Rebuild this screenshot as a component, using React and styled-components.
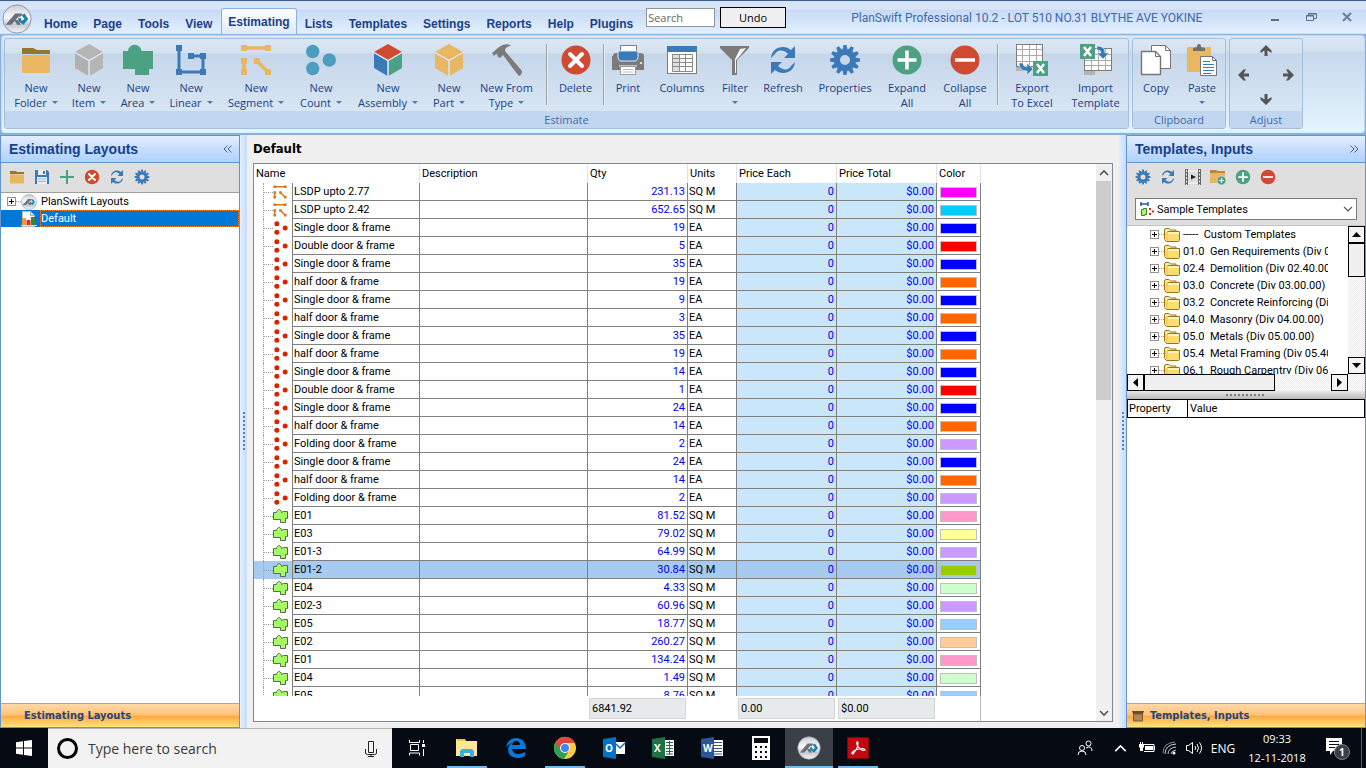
import React from "react";
import styled, { createGlobalStyle } from "styled-components";

const ui = `Roboto, "Noto Sans", sans-serif`;
const ribbonFont = `"Open Sans", "Noto Sans", sans-serif`;
const tabFont = `"Liberation Sans", Arial, sans-serif`;
const boldFont = `"DejaVu Sans Condensed", "DejaVu Sans", sans-serif`;

const GlobalStyle = createGlobalStyle`
* { box-sizing: border-box; }
body { margin: 0; background: #f0f0f0; font-family: ${ui}; font-size: 11px; color: #000; overflow: hidden; }
button, input, select { font: inherit; color: inherit; margin: 0; padding: 0; border: 0; background: none; border-radius: 0; }
ul { list-style: none; margin: 0; padding: 0; }
h1, h2, p { margin: 0; }
svg { display: block; flex: none; }
`;

/* ---------- icons ---------- */

const Svg = ({ size = 32, w, h, box = "0 0 32 32", children }) => (
	<svg width={w || size} height={h || size} viewBox={box} fill="none" aria-hidden="true">{children}</svg>
);

const Cube = ({ top, left, right, size }) => (
	<Svg size={size}>
		<path d="M16 0 30 8 16 16 2 8z" fill={top} />
		<path d="M2 9 15.500 17V32L2 24z" fill={left} />
		<path d="M30 9 16.500 17V32L30 24z" fill={right} />
		<path d="M2 8.500 16 16.500 30 8.500M16 16.500V32" stroke="#dbe6f3" strokeWidth="1.200" />
	</Svg>
);

const FolderIcon = ({ size }) => (
	<Svg size={size}>
		<path d="M2 4h11l4 2h13v4H2z" fill="#94762c" />
		<rect x="2" y="11" width="28" height="18" rx="1" fill="#e9b662" />
	</Svg>
);

const AreaIcon = () => (
	<Svg>
		<circle cx="12.700" cy="7.500" r="6.800" fill="#4ba181" />
		<path d="M1 7h30v18h-4v6H13v-6H1z" fill="#4ba181" />
	</Svg>
);

const LinearIcon = () => (
	<Svg>
		<path d="M4 4v24h24V12H16" stroke="#3b79b7" strokeWidth="3" />
		<path d="M1 1h6v6H1zM1 25h6v6H1zM25 25h6v6h-6zM25 9h6v6h-6zM13 9h6v6h-6z" fill="#3b79b7" />
	</Svg>
);

const SegmentIcon = ({ size, color = "#e9b662" }) => (
	<Svg size={size}>
		<path d="M4 4h24M4 17v11M17 17l11 11" stroke={color} strokeWidth="3.500" />
		<path d="M1 1h6v6H1zM25 1h6v6h-6zM1 14h6v6H1zM1 25h6v6H1zM14 14h6v6h-6zM25 25h6v6h-6z" fill={color} />
	</Svg>
);

const CountIcon = ({ size, color = "#4c9dc0", r = 6.7 }) => (
	<Svg size={size}>
		<circle cx="7.700" cy="7.500" r={r} fill={color} />
		<circle cx="7.700" cy="24.500" r={r} fill={color} />
		<circle cx="24.300" cy="16" r={r} fill={color} />
	</Svg>
);

const HammerIcon = () => (
	<Svg>
		<path d="M1 9 8 3Q13-1 20 1L19 2Q14 3 14 7L31 27Q31 31 28 32L27 31 12 11 9 14 7 13 6 10Q4 10 3 12z" fill="#7b7b7b" />
	</Svg>
);

const DeleteIcon = ({ size }) => (
	<Svg size={size}>
		<circle cx="16" cy="16" r="14.500" fill="#cf4a31" />
		<path d="M10 10 22 22M22 10 10 22" stroke="#fff" strokeWidth="4" strokeLinecap="round" />
	</Svg>
);

const PrintIcon = () => (
	<Svg>
		<rect x="8.500" y="1.500" width="16" height="8" fill="#fff" stroke="#7f7f7f" />
		<path d="M1 12q0-3 3-3h24q4 0 4 3v14H0V12z" fill="#7b7b7b" />
		<path d="M6 7h20v7l-2 3H8l-2-3z" fill="#3b79b7" stroke="#dfe8f3" />
		<circle cx="29" cy="19" r="1" fill="#fff" />
		<path d="M7 22h18" stroke="#fff" />
		<rect x="8.500" y="22.500" width="15" height="8" fill="#fff" stroke="#9a9a9a" />
		<path d="M11 25.500h10M11 28h10" stroke="#bbb" />
	</Svg>
);

const ColumnsIcon = () => (
	<Svg>
		<rect x="1.500" y="2.500" width="29" height="27" fill="#fff" stroke="#7d7d7d" />
		<rect x="1" y="2" width="30" height="6" fill="#3b79b7" />
		<path d="M6 10h7v17H6z" fill="#dedede" />
		<path d="M6.500 10.500h20v17h-20zM13.500 10v17M19.500 10v17M6 14.500h20M6 18.500h20M6 22.500h20" stroke="#8b8b8b" />
	</Svg>
);

const FilterIcon = () => (
	<Svg>
		<path d="M1 2h29v2L18 16v15h-5V16L1 4z" fill="#7b7b7b" />
		<path d="M27 4 19 14 17 16v13h-1V15l5-10z" fill="#f4f7fb" />
	</Svg>
);

const RefreshIcon = ({ size }) => (
	<Svg size={size}>
		<path d="M4 14C5 3 17 0 24 6L28 2V14H17L21 10C16 5 10 6 8 10z" fill="#3b79b7" />
		<path d="M28 18C27 29 15 32 8 26L4 30V18H15L11 22C16 27 22 26 24 22z" fill="#3b79b7" />
	</Svg>
);

const GearIcon = ({ size }) => (
	<Svg size={size}>
		<circle cx="16" cy="16" r="8" stroke="#3b79b7" strokeWidth="6" />
		{[...Array(12)].map((_, i) => (
			<path key={i} d="M13.500 6 14.500 1h3L18.500 6z" fill="#3b79b7" transform={`rotate(${i * 30} 16 16)`} />
		))}
	</Svg>
);

const PlusCircle = ({ size }) => (
	<Svg size={size}>
		<circle cx="16" cy="16" r="14.500" fill="#4ba181" />
		<path d="M16 6.500v19M6.500 16h19" stroke="#fff" strokeWidth="3.500" />
	</Svg>
);

const MinusCircle = ({ size }) => (
	<Svg size={size}>
		<circle cx="16" cy="16" r="14.500" fill="#cf4a31" />
		<path d="M6 16h20" stroke="#fff" strokeWidth="3.500" />
	</Svg>
);

const ExportIcon = () => (
	<Svg>
		<rect x=".5" y=".5" width="26" height="22" fill="#fff" stroke="#7d7d7d" />
		<path d="M1 5.500h25M1 11.500h25M1 17.500h25M6.500 1v21M13.500 1v21M20.500 1v21" stroke="#aaa" />
		<path d="M0 23h16v4H0z" fill="#b4b4b4" />
		<path d="M3 19h4q0 4 4 4v-4l6 6-6 6v-4q-8 0-8-8z" fill="#3b79b7" stroke="#fff" strokeWidth=".5" />
		<rect x="17" y="17" width="15" height="15" fill="#4ba181" />
		<path d="m21 20 7 9m0-9-7 9" stroke="#fff" strokeWidth="2.500" />
	</Svg>
);

const ImportIcon = () => (
	<Svg>
		<rect x="4.500" y="4.500" width="27" height="22" fill="#fff" stroke="#7d7d7d" />
		<path d="M5 10.500h26M5 16.500h26M5 21.500h26M11.500 5v21M18.500 5v21M25.500 5v21" stroke="#aaa" />
		<path d="M4 27h11v4H4z" fill="#b4b4b4" />
		<path d="M15 27h15v3H15z" fill="#d7d7d7" />
		<rect x="0" y="0" width="15" height="15" fill="#4ba181" />
		<path d="m4 3 7 9m0-9-7 9" stroke="#fff" strokeWidth="2.500" />
		<path d="M17 2v4q4 0 4 3h-4l6 6 6-6h-4q0-7-8-7z" fill="#3b79b7" stroke="#fff" strokeWidth=".5" />
	</Svg>
);

const CopyIcon = () => (
	<Svg>
		<path d="M11.500 1.500h14l5 5v18h-19z" fill="#fff" stroke="#767676" />
		<path d="M25.500 1.500v5h5" stroke="#767676" />
		<path d="M1.500 7.500h14l5 5v18h-19z" fill="#fff" stroke="#767676" strokeWidth="1.400" />
		<path d="M15.500 7.500v5h5" stroke="#767676" />
	</Svg>
);

const PasteIcon = () => (
	<Svg>
		<rect x="1" y="3" width="24" height="25" rx="1" fill="#e9b662" />
		<path d="M7 7V4l4-1q0-3 2-3t2 3l4 1v3z" fill="#707070" />
		<path d="M14.500 12.500h12l4 4v15h-16z" fill="#fff" stroke="#767676" />
		<path d="M26.500 12.500v4h4" stroke="#767676" />
		<path d="M17 17.500h7M17 20.500h11M17 23.500h11M17 26.500h11M17 29.500h8" stroke="#3b79b7" />
	</Svg>
);

const ArrowIcon = ({ turn }) => (
	<Svg size={12} box="0 0 12 12">
		<path d="M6 0 11.500 5.500V8L7.500 5.500V11h-3V5.500L.5 8V5.500z" fill="#555" transform={`rotate(${turn} 6 6)`} />
	</Svg>
);

const LogoIcon = ({ size }) => (
	<Svg size={size}>
		<defs>
			<linearGradient id="metal" x1="0" y1="0" x2="0" y2="1">
				<stop offset="0" stopColor="#c9ccd4" />
				<stop offset=".45" stopColor="#fafafc" />
				<stop offset=".7" stopColor="#c6c9d1" />
				<stop offset="1" stopColor="#f5f6f8" />
			</linearGradient>
		</defs>
		<circle cx="16" cy="16" r="15" fill="url(#metal)" stroke="#8a93a3" />
		<path d="M4 22 14 10H21L22 11 19 14 18 13 10 22z" fill="#6c7076" />
		<path d="M13 17h4l3 5h-4z" fill="#6c7076" />
		<path d="M21 12 24 10 28 16 23 22 18 19 17 15 20 15 21 18 24 16z" fill="#1786a5" />
	</Svg>
);

const SaveIcon = () => (
	<Svg size={16} box="0 0 16 16">
		<path d="M1 1h12l2 2v12H1z" fill="#3b79b7" />
		<path d="M4 1h8v5H4zM3 8h10v7H3z" fill="#e8edf3" />
		<path d="M9 2h2v3H9z" fill="#3b79b7" />
		<path d="M4 10h8M4 12.500h8" stroke="#9fb2c8" />
	</Svg>
);

const PlusIcon = () => (
	<Svg size={16} box="0 0 16 16"><path d="M8 1v14M1 8h14" stroke="#4ba181" strokeWidth="2" /></Svg>
);

const FilmIcon = () => (
	<Svg size={16} box="0 0 16 16">
		<path d="M0 0h16v16H0z" fill="#dcdcdc" />
		<path d="M0 0h3v16H0zM13 0h3v16h-3z" fill="#666" />
		<path d="M1.500 1v15M14.500 1v15" stroke="#eee" strokeDasharray="2 1.500" />
		<path d="M3 2h10M3 14h10" stroke="#fff" />
		<path d="M6 5.500 11 8 6 10.500z" fill="#222" />
	</Svg>
);

const FolderPlusIcon = () => (
	<Svg size={16} box="0 0 16 16">
		<path d="M0 1h6l2 1h7v2H0z" fill="#b68a3c" />
		<path d="M0 4h15v10H0z" fill="#e9b662" />
		<circle cx="11.500" cy="11.500" r="4.500" fill="#4ba181" stroke="#e6e6e6" strokeWidth=".7" />
		<path d="M11.500 9v5M9 11.500h5" stroke="#fff" strokeWidth="1.200" />
	</Svg>
);

const ChartIcon = () => (
	<Svg size={16} box="0 0 16 16">
		<path d="M1.500.5h8l4 4v11h-12z" fill="#fff" stroke="#bbb" />
		<path d="M9.500.5v4h4" fill="#ddd" stroke="#aaa" />
		<path d="M1 7h4v7H1z" fill="#f0a020" />
		<path d="M5.500 9h4v5h-4z" fill="#d93024" />
		<path d="M10 6h4v8h-4z" fill="#2e8b3d" />
		<path d="M0 14.500h16" stroke="#d8dde2" />
	</Svg>
);

const BlobIcon = () => (
	<Svg size={16} box="0 0 16 16">
		<path d="M.5 4.500h3v-1l2-2h1l2 2v1l2-1h4v7h-2v4h-5v-3h-7z" fill="#a4fb63" stroke="#5a6a52" />
	</Svg>
);

const YellowFolder = () => (
	<Svg size={16} box="0 0 16 16">
		<path d="M.5 12V3q0-1.500 1.500-1.500h3L6.500 3H12v2" fill="#fdf0a8" stroke="#9c7417" />
		<path d="M3.500 4.500h12v9l-1 1h-12l-2-2" fill="#fbdc6e" stroke="#9c7417" />
		<path d="M1 5h3v8H2z" fill="#f5cf5c" />
		<path d="M4 5.500h11M4 6.500h11" stroke="#fff3bd" />
	</Svg>
);

const TemplatesIcon = () => (
	<Svg size={14} box="0 0 14 14">
		<path d="M1 2h7M1 0v4M8 0v4" stroke="#1f5e9c" strokeWidth="1.500" />
		<path d="M1.500 7.500h2v-1h3v6h-2v1h-3z" fill="#a4fb63" stroke="#4c7a34" />
		<path d="M9 6h2v2H9zM9 11h2v2H9zM12 8.500h2v2h-2z" fill="#d22" />
	</Svg>
);

const BoxIcon = () => (
	<Svg size={12} box="0 0 12 12">
		<path d="M0 1h12l-1 3H1z" fill="#6b4c2a" />
		<path d="M1.500 4h9v7h-9z" fill="#ad8657" stroke="#7b5a34" />
	</Svg>
);

const Chevron = ({ turn = 0, color = "#555", size = 10, width = 1.6 }) => (
	<Svg size={size} box="0 0 10 10">
		<path d="M1 3 5 7 9 3" stroke={color} strokeWidth={width} transform={`rotate(${turn} 5 5)`} />
	</Svg>
);

const DoubleChevron = ({ turn = 0 }) => (
	<Svg size={10} box="0 0 10 10">
		<path d="M4.500 1.500 1 5 4.500 8.500M8.500 1.500 5 5 8.500 8.500" stroke="#3a62a4" transform={`rotate(${turn} 5 5)`} />
	</Svg>
);

const Triangle = ({ turn }) => (
	<Svg size={9} box="0 0 9 9"><path d="M0 7 4.500 2 9 7z" fill="#000" transform={`rotate(${turn} 4.500 4.500)`} /></Svg>
);

/* ---------- window ---------- */

const Desktop = styled.div`
display: flex;
flex-direction: column;
height: 100vh;
`;

const TitleBar = styled.header`
display: flex;
align-items: flex-end;
height: 35px;
padding-left: 2px;
border-top: 1px solid #3d5c8c;
border-bottom: 1px solid #8db2e3;
background: linear-gradient(#d5e3f6 0, #dbe6fb 8px, #c7daf5 9px, #e2effe 32px, #b6d4f6 33px);
flex: none;
`;

const LogoButton = styled.button`
display: flex;
align-items: center;
width: 34px;
height: 30px;
`;

const Tab = styled.button`
font-family: ${tabFont};
font-size: 12px;
font-weight: bold;
color: #1b4086;
height: ${p => p.$active ? "26px" : "20px"};
line-height: 20px;
padding: 0 8px;
${p => p.$active && `
	padding: 0 6px;
	margin-left: 1px;
	border: 1px solid #8ab1e4;
	border-bottom: 0;
	border-radius: 3px 3px 0 0;
	background: linear-gradient(#fff, #dfe9f6);
`}
`;

const SearchBox = styled.input`
font-family: ${ribbonFont};
width: 69px;
height: 19px;
margin: 0 5px 7px;
padding: 0 1px;
border: 1px solid #8f959c;
background: #fff;
&::placeholder { color: #666; opacity: 1; }
`;

const UndoButton = styled.button`
font-family: ${ribbonFont};
width: 66px;
height: 21px;
margin-bottom: 6px;
border: 1px solid #000;
background: #f0f0f0;
`;

const WindowTitle = styled.h1`
flex: 1;
align-self: flex-start;
padding: 8px 0 0 65px;
font: normal 12px/18px ${ui};
color: #4169aa;
white-space: nowrap;
`;

const WindowButtons = styled.div`
display: flex;
align-self: flex-start;
gap: 24px;
padding: 10px 13px 0 0;
`;

const RibbonShell = styled.div`
flex: none;
background: #8caedb;
padding-bottom: 2px;
`;

const Ribbon = styled.section`
display: flex;
gap: 3px;
height: 98px;
margin: 0 1px;
padding: 2px;
border: 1px solid #b9dbf5;
border-bottom: 2px solid #d5f3fc;
border-radius: 4px;
background: linear-gradient(#dae6f3 0, #d3e1f0 15px, #c6d8ec 16px, #e3f4fe 94px);
`;

const Group = styled.div`
display: flex;
flex-direction: column;
border: 1px solid #a3bfdc;
border-radius: 3px;
background: linear-gradient(#dce7f3 0, #d3e0ef 14px, #c6d6ea 15px, #d8e6f4 74px);
`;

const GroupBody = styled.div`
display: flex;
flex: 1;
padding-top: 5px;
`;

const GroupName = styled.div`
height: 17px;
font: 11px/17px ${ribbonFont};
color: #4469ab;
text-align: center;
background: #c1d7ef;
`;

const Tool = styled.button`
display: flex;
flex-direction: column;
align-items: center;
gap: 4px;
width: ${p => p.$w}px;
font-family: ${ribbonFont};
line-height: 15px;
color: #1b4186;
white-space: nowrap;
`;

const ToolLine = styled.span`
display: flex;
align-items: center;
justify-content: center;
gap: 5px;
height: 15px;
`;

const Caret = styled.i`
border: 3px solid transparent;
border-top-color: #4d7db8;
border-bottom: 0;
`;

const ToolRule = styled.div`
width: 2px;
height: 61px;
margin: 0 2px;
background: #a2a4a8;
border-right: 1px solid #e3ebf5;
`;

const AdjustGrid = styled.div`
display: grid;
flex: 1;
grid-template-columns: repeat(3, 22px);
grid-template-rows: repeat(3, 24px);
place-items: center;
padding: 0 3px;
`;

const ArrowButton = styled.button`
grid-area: ${p => p.$area};
`;

const tools = [
	[62, FolderIcon, "New", "Folder", 1],
	[44, () => <Cube top="#b5b5b5" left="#b0b0b0" right="#b5b5b5" />, "New", "Item", 1],
	[54, AreaIcon, "New", "Area", 1],
	[52, LinearIcon, "New", "Linear", 1],
	[78, SegmentIcon, "New", "Segment", 1],
	[52, CountIcon, "New", "Count", 1],
	[82, () => <Cube top="#cf4a31" left="#3b79b7" right="#4ba181" />, "New", "Assembly", 1],
	[40, () => <Cube top="#e9b662" left="#e9b662" right="#e9b662" />, "New", "Part", 1],
	[75, HammerIcon, "New From", "Type", 1],
	null,
	[51, DeleteIcon, "Delete"],
	null,
	[42, PrintIcon, "Print"],
	[66, ColumnsIcon, "Columns"],
	[40, FilterIcon, "Filter", "", 1],
	[56, RefreshIcon, "Refresh"],
	[68, GearIcon, "Properties"],
	[56, PlusCircle, "Expand", "All"],
	[60, MinusCircle, "Collapse", "All"],
	null,
	[62, ExportIcon, "Export", "To Excel"],
	[65, ImportIcon, "Import", "Template"],
];

const clipboard = [
	[46, CopyIcon, "Copy"],
	[46, PasteIcon, "Paste", "", 1],
];

const Tools = ({ items }) => items.map((item, i) => {
	if (!item) return <ToolRule key={i} />;
	const [w, Icon, first, second, menu] = item;
	return (
		<Tool key={i} $w={w}>
			<Icon />
			<span>
				<ToolLine>{first}</ToolLine>
				{(second || menu) && <ToolLine>{second}{menu && <Caret />}</ToolLine>}
			</span>
		</Tool>
	);
});

const Header = () => (
	<>
		<TitleBar>
			<LogoButton aria-label="Main menu"><LogoIcon size={30} /></LogoButton>
			{["Home", "Page", "Tools", "View", "Estimating", "Lists", "Templates", "Settings", "Reports", "Help", "Plugins"].map(t => (
				<Tab key={t} $active={t === "Estimating"}>{t}</Tab>
			))}
			<SearchBox placeholder="Search" aria-label="Search" />
			<UndoButton>Undo</UndoButton>
			<WindowTitle>PlanSwift Professional 10.2 - LOT 510 NO.31 BLYTHE AVE YOKINE</WindowTitle>
			<WindowButtons>
				<button aria-label="Minimize"><Svg size={12} box="0 0 12 12"><path d="M2 9h8" stroke="#5c6f8d" strokeWidth="2" /></Svg></button>
				<button aria-label="Restore"><Svg size={12} box="0 0 12 12"><path d="M3.500 4V2.500h8v5H9M1.500 4.500h7v5h-7z" stroke="#5c6f8d" /><path d="M3 3h8M1 5h8" stroke="#5c6f8d" /></Svg></button>
				<button aria-label="Close"><Svg size={12} box="0 0 12 12"><path d="m2 2 8 8m0-8-8 8" stroke="#6c7e99" strokeWidth="2" /></Svg></button>
			</WindowButtons>
		</TitleBar>
		<RibbonShell>
			<Ribbon>
				<Group>
					<GroupBody><Tools items={tools} /></GroupBody>
					<GroupName>Estimate</GroupName>
				</Group>
				<Group>
					<GroupBody><Tools items={clipboard} /></GroupBody>
					<GroupName>Clipboard</GroupName>
				</Group>
				<Group>
					<AdjustGrid>
						<ArrowButton $area="1 / 2" aria-label="Up"><ArrowIcon turn={0} /></ArrowButton>
						<ArrowButton $area="2 / 1" aria-label="Left"><ArrowIcon turn={270} /></ArrowButton>
						<ArrowButton $area="2 / 3" aria-label="Right"><ArrowIcon turn={90} /></ArrowButton>
						<ArrowButton $area="3 / 2" aria-label="Down"><ArrowIcon turn={180} /></ArrowButton>
					</AdjustGrid>
					<GroupName>Adjust</GroupName>
				</Group>
			</Ribbon>
		</RibbonShell>
	</>
);

/* ---------- panels ---------- */

const Workspace = styled.main`
display: flex;
flex: 1;
min-height: 0;
background: #f0f0f0;
`;

const Panel = styled.aside`
display: flex;
flex-direction: column;
flex: none;
width: 240px;
border: 1px solid #6593cf;
background: #fff;
`;

const PanelTitle = styled.div`
display: flex;
align-items: center;
justify-content: space-between;
flex: none;
height: 27px;
padding: 0 6px 0 8px;
border-bottom: 1px solid #6593cf;
background: linear-gradient(#e3efff, #c8ddfb 50%, #afd2ff);
h2 {
	font: bold 14px ${tabFont};
	color: #15428b;
}
`;

const PanelTools = styled.div`
display: flex;
align-items: flex-start;
gap: 9px;
flex: none;
height: ${p => p.$tall ? "29px" : "30px"};
padding: 6px 8px 0;
background: #dfdfdf;
border-bottom: ${p => p.$tall ? "0" : "1px solid #a0a0a0"};
`;

const PanelFooter = styled.button`
display: flex;
align-items: center;
gap: 6px;
flex: none;
height: 24px;
padding-left: ${p => p.$indent}px;
border-top: 1px solid #c9a36a;
background: linear-gradient(#ffd9a8 0, #ffc27a 11px, #ffa93f 12px, #ffe182 23px);
font: bold 11px ${boldFont};
color: #24457f;
`;

const Splitter = styled.div`
display: flex;
align-items: center;
justify-content: center;
flex: none;
width: 7px;
background: linear-gradient(90deg, #e3efff, #c4dcfc);
`;

const Grip = styled.div`
width: ${p => p.$wide ? "40px" : "2px"};
height: ${p => p.$wide ? "2px" : "40px"};
background: repeating-linear-gradient(${p => p.$wide ? "90deg" : "180deg"}, #6f7f96 0 2px, transparent 2px 4px);
`;

const LayoutTree = styled.ul`
flex: 1;
`;

const LayoutRow = styled.li`
display: flex;
align-items: center;
height: 17px;
padding-left: ${p => p.$selected ? "20px" : "6px"};
background: ${p => p.$selected ? "#0078d7" : "transparent"};
`;

const LayoutLabel = styled.button`
flex: 1;
height: 17px;
margin-left: 3px;
padding-left: 1px;
text-align: left;
line-height: 15px;
${p => p.$selected && `
	padding-left: 0;
	color: #fff;
	border: 1px dotted #ff8728;
`}
`;

const Expander = styled.button`
display: grid;
place-items: center;
flex: none;
width: 9px;
height: 9px;
border: 1px solid #919191;
background: linear-gradient(#000, #000) center / 5px 1px no-repeat, linear-gradient(#000, #000) center / 1px 5px no-repeat, #fff;
`;

const Stub = styled.i`
flex: none;
width: ${p => p.$w}px;
border-top: 1px dotted #a0a0a0;
`;

const LeftPanel = () => (
	<Panel>
		<PanelTitle>
			<h2>Estimating Layouts</h2>
			<button aria-label="Collapse panel"><DoubleChevron /></button>
		</PanelTitle>
		<PanelTools>
			<button aria-label="Open"><FolderIcon size={16} /></button>
			<button aria-label="Save"><SaveIcon /></button>
			<button aria-label="Add"><PlusIcon /></button>
			<button aria-label="Delete"><DeleteIcon size={16} /></button>
			<button aria-label="Refresh"><RefreshIcon size={16} /></button>
			<button aria-label="Settings"><GearIcon size={16} /></button>
		</PanelTools>
		<LayoutTree>
			<LayoutRow>
				<Expander aria-label="Expand" />
				<Stub $w={5} />
				<LogoIcon size={16} />
				<LayoutLabel>PlanSwift Layouts</LayoutLabel>
			</LayoutRow>
			<LayoutRow $selected>
				<ChartIcon />
				<LayoutLabel $selected>Default</LayoutLabel>
			</LayoutRow>
		</LayoutTree>
		<PanelFooter $indent={23}>Estimating Layouts</PanelFooter>
	</Panel>
);

const templates = [
	["-----", "Custom Templates"],
	["01.0", "Gen Requirements (Div 01.00.00)"],
	["02.4", "Demolition (Div 02.40.00)"],
	["03.0", "Concrete (Div 03.00.00)"],
	["03.2", "Concrete Reinforcing (Div 03.20.00)"],
	["04.0", "Masonry (Div 04.00.00)"],
	["05.0", "Metals (Div 05.00.00)"],
	["05.4", "Metal Framing (Div 05.40.00)"],
	["06.1", "Rough Carpentry (Div 06.10.00)"],
];

const TemplatePicker = styled.label`
display: flex;
align-items: flex-start;
flex: none;
height: 34px;
padding: 6px 8px 0;
background: #dfdfdf;
border-bottom: 1px solid #c4c4c4;
`;

const PickerFrame = styled.span`
display: flex;
align-items: center;
flex: 1;
height: 22px;
gap: 3px;
padding: 0 3px 0 4px;
border: 1px solid #7a7a7a;
background: #fff;
select {
	flex: 1;
	appearance: none;
	outline: 0;
}
`;

const TemplateArea = styled.div`
display: grid;
grid-template-columns: 1fr 17px;
grid-template-rows: 148px 17px;
flex: none;
`;

const TemplateTree = styled.ul`
overflow: hidden;
margin-right: 20px;
`;

const TemplateRow = styled.li`
display: flex;
align-items: center;
height: 17px;
padding-left: 23px;
white-space: pre;
`;

const TemplateName = styled.span`
padding-left: 3px;
`;

const Track = styled.div`
display: flex;
flex-direction: ${p => p.$row ? "row" : "column"};
background: repeating-conic-gradient(#fff 0 25%, #e9e9e9 0 50%) 0 0 / 2px 2px;
`;

const TrackButton = styled.button`
display: grid;
place-items: center;
width: 17px;
height: 17px;
border: 1px solid #000;
background: #f4f4f4;
`;

const Thumb = styled.div`
flex: 0 0 ${p => p.$size}px;
border: 1px solid #000;
background: #f0f0f0;
`;

const Fill = styled.div`
flex: 1;
`;

const HSplitter = styled.div`
display: grid;
place-items: center;
flex: none;
height: 8px;
background: linear-gradient(#e8e8e8, #b9b9b9);
`;

const PropertyTable = styled.table`
width: 100%;
table-layout: fixed;
border-collapse: collapse;
border: 1px solid #000;
th {
	height: 18px;
	padding: 0 2px;
	border-right: 1px solid #000;
	font-weight: normal;
	text-align: left;
}
th:first-child { width: 60px; padding: 0 1px; }
`;

const RightPanel = () => (
	<Panel>
		<PanelTitle>
			<h2>Templates, Inputs</h2>
			<button aria-label="Collapse panel"><DoubleChevron turn={180} /></button>
		</PanelTitle>
		<PanelTools $tall>
			<button aria-label="Settings"><GearIcon size={16} /></button>
			<button aria-label="Refresh"><RefreshIcon size={16} /></button>
			<button aria-label="Video"><FilmIcon /></button>
			<button aria-label="Add folder"><FolderPlusIcon /></button>
			<button aria-label="Add"><PlusCircle size={16} /></button>
			<button aria-label="Remove"><MinusCircle size={16} /></button>
		</PanelTools>
		<TemplatePicker>
			<PickerFrame>
				<TemplatesIcon />
				<select aria-label="Template set"><option>Sample Templates</option></select>
				<Chevron width={1.1} />
			</PickerFrame>
		</TemplatePicker>
		<TemplateArea>
			<TemplateTree>
				{templates.map(([code, name]) => (
					<TemplateRow key={code}>
						<Expander aria-label={`Expand ${name}`} />
						<Stub $w={5} />
						<YellowFolder />
						<TemplateName>{code + "  " + name}</TemplateName>
					</TemplateRow>
				))}
			</TemplateTree>
			<Track>
				<TrackButton aria-label="Scroll up"><Triangle turn={0} /></TrackButton>
				<Thumb $size={34} />
				<Fill />
				<TrackButton aria-label="Scroll down"><Triangle turn={180} /></TrackButton>
			</Track>
			<Track $row>
				<TrackButton aria-label="Scroll left"><Triangle turn={270} /></TrackButton>
				<Thumb $size={131} />
				<Fill />
				<TrackButton aria-label="Scroll right"><Triangle turn={90} /></TrackButton>
			</Track>
			<Track />
		</TemplateArea>
		<HSplitter><Grip $wide /></HSplitter>
		<PropertyTable>
			<thead><tr><th>Property</th><th>Value</th></tr></thead>
		</PropertyTable>
		<Fill />
		<PanelFooter $indent={5}><BoxIcon />Templates, Inputs</PanelFooter>
	</Panel>
);

/* ---------- estimate grid ---------- */

const blue = "#0000ff";
const orange = "#ff6600";
const red = "#ff0000";
const violet = "#cc99ff";
const pink = "#ff99cc";
const mint = "#ccffcc";
const sky = "#99ccff";

const rows = [
	["segment", "LSDP upto 2.77", "231.13", "#ff00ff"],
	["segment", "LSDP upto 2.42", "652.65", "#00ccff"],
	["count", "Single door & frame", "19", blue],
	["count", "Double door & frame", "5", red],
	["count", "Single door & frame", "35", blue],
	["count", "half door & frame", "19", orange],
	["count", "Single door & frame", "9", blue],
	["count", "half door & frame", "3", orange],
	["count", "Single door & frame", "35", blue],
	["count", "half door & frame", "19", orange],
	["count", "Single door & frame", "14", blue],
	["count", "Double door & frame", "1", red],
	["count", "Single door & frame", "24", blue],
	["count", "half door & frame", "14", orange],
	["count", "Folding door & frame", "2", violet],
	["count", "Single door & frame", "24", blue],
	["count", "half door & frame", "14", orange],
	["count", "Folding door & frame", "2", violet],
	["area", "E01", "81.52", pink],
	["area", "E03", "79.02", "#ffff99"],
	["area", "E01-3", "64.99", violet],
	["area", "E01-2", "30.84", "#99cc00"],
	["area", "E04", "4.33", mint],
	["area", "E02-3", "60.96", violet],
	["area", "E05", "18.77", sky],
	["area", "E02", "260.27", "#ffcc99"],
	["area", "E01", "134.24", pink],
	["area", "E04", "1.49", mint],
	["area", "E05", "8.76", sky],
];

const rowIcons = {
	segment: <SegmentIcon size={14} color="#d9780f" />,
	count: <CountIcon size={16} color="#d92400" r={5} />,
	area: <BlobIcon />,
};

const Center = styled.section`
display: flex;
flex-direction: column;
flex: 1;
min-width: 0;
padding: 0 6px 6px;
h2 {
	height: 28px;
	font: bold 13px/28px ${boldFont};
}
`;

const GridFrame = styled.div`
display: flex;
flex: 1;
min-height: 0;
border: 1px solid #828790;
background: #fff;
`;

const GridMain = styled.div`
display: flex;
flex-direction: column;
flex: 1;
min-width: 0;
`;

const GridBody = styled.div`
flex: 1;
min-height: 0;
overflow: hidden;
`;

const Grid = styled.table`
width: 727px;
table-layout: fixed;
border-collapse: separate;
border-spacing: 0;
`;

const HeadCell = styled.th`
height: 19px;
padding: 0 2px;
border-right: 1px solid #e2e2e2;
font-weight: normal;
text-align: left;
`;

const Row = styled.tr`
background: ${p => p.$selected ? "#a7caf0" : "#fff"};
`;

const Cell = styled.td`
height: 18px;
padding: 1px ${p => p.$right ? "2px" : "1px"} 0;
border-right: 1px solid #808080;
border-bottom: 1px solid #808080;
line-height: 16px;
white-space: nowrap;
text-align: ${p => p.$right ? "right" : "left"};
color: ${p => p.$right ? "#0000f0" : "#000"};
background: ${p => p.$price ? "#cae6fb" : "transparent"};
`;

const TreeCell = styled(Cell)`
padding: 0 0 0 9px;
border-bottom: 0;
`;

const Branch = styled.span`
display: flex;
align-items: center;
height: 18px;
border-left: 1px dotted #a0a0a0;
`;

const Swatch = styled.span`
display: block;
height: 11px;
margin: 0 2px;
border: 1px solid #c0c0c0;
background: ${p => p.$color};
`;

const Totals = styled.div`
display: grid;
grid-template-columns: 97px 46px 97px 97px;
column-gap: 3px;
align-items: start;
flex: none;
width: 727px;
height: 25px;
padding: 2px 0 0 335px;
border-right: 1px solid #b8b8b8;
output {
	height: 21px;
	padding: 0 2px;
	border: 1px solid #d4d6d6;
	background: #e6eaea;
	line-height: 20px;
}
`;

const ScrollBar = styled.div`
display: flex;
flex-direction: column;
width: 16px;
padding-right: 1px;
background: #f0f0f0;
button {
	display: grid;
	place-items: center;
	height: 17px;
}
`;

const ScrollThumb = styled.div`
flex: 0 0 219px;
background: #cdcdcd;
`;

const EstimateGrid = () => (
	<Center>
		<h2>Default</h2>
		<GridFrame>
			<GridMain>
				<GridBody>
					<Grid>
						<colgroup>
							{[39, 127, 168, 100, 49, 100, 100, 44].map((w, i) => <col key={i} width={w} />)}
						</colgroup>
						<thead>
							<tr>
								<HeadCell colSpan={2}>Name</HeadCell>
								{["Description", "Qty", "Units", "Price Each", "Price Total", "Color"].map(h => (
									<HeadCell key={h}>{h}</HeadCell>
								))}
							</tr>
						</thead>
						<tbody>
							{rows.map(([kind, name, qty, color], i) => {
								const selected = name === "E01-2";
								return (
									<Row key={i} $selected={selected}>
										<TreeCell><Branch><Stub $w={9} />{rowIcons[kind]}</Branch></TreeCell>
										<Cell>{name}</Cell>
										<Cell />
										<Cell $right>{qty}</Cell>
										<Cell>{kind === "count" ? "EA" : "SQ M"}</Cell>
										<Cell $right $price={!selected}>0</Cell>
										<Cell $right $price={!selected}>$0.00</Cell>
										<Cell><Swatch $color={color} /></Cell>
									</Row>
								);
							})}
						</tbody>
					</Grid>
				</GridBody>
				<Totals>
					<output>6841.92</output>
					<span />
					<output>0.00</output>
					<output>$0.00</output>
				</Totals>
			</GridMain>
			<ScrollBar>
				<button aria-label="Scroll up"><Chevron turn={180} /></button>
				<ScrollThumb />
				<Fill />
				<button aria-label="Scroll down"><Chevron /></button>
			</ScrollBar>
		</GridFrame>
	</Center>
);

/* ---------- taskbar ---------- */

const Taskbar = styled.footer`
display: flex;
flex: none;
height: 40px;
background: #060b13;
color: #fff;
font-family: ${ribbonFont};
`;

const TaskButton = styled.button`
display: grid;
place-items: center;
flex: none;
width: ${p => p.$w || 49}px;
border-bottom: 2px solid transparent;
border-top: 2px solid transparent;
${p => p.$running && `
	background: linear-gradient(#76b9ed, #76b9ed) bottom / 40px 2px no-repeat border-box;
`}
${p => p.$active && `
	background: #3b4048;
	border-bottom-color: #76b9ed;
	border-top-color: #3b4048;
`}
`;

const TaskSearch = styled.label`
display: flex;
align-items: center;
gap: 9px;
flex: none;
width: 344px;
padding: 0 13px 0 8px;
border-top: 1px solid #b5b5b5;
background: #f2f2f2;
input {
	flex: 1;
	min-width: 0;
	font-size: 14px;
	outline: 0;
}
input::placeholder { color: #3a3a3a; opacity: 1; }
`;

const Tray = styled.div`
display: flex;
align-items: center;
margin-left: auto;
font-size: 12px;
`;

const TrayButton = styled.button`
display: grid;
place-items: center;
width: ${p => p.$w}px;
height: 40px;
line-height: 19px;
`;

const Clock = styled(TrayButton)`
display: block;
font-size: 11px;
`;

const ShowDesktop = styled.button`
width: 5px;
height: 40px;
border-left: 1px solid #5b5f66;
`;

const Letter = styled.text`
font: bold 10px "Open Sans", sans-serif;
fill: #fff;
`;

const OfficeIcon = ({ color, letter, children }) => (
	<Svg size={24} box="0 0 24 24">
		{children}
		<path d="M1 3 14 1v22L1 21z" fill={color} />
		<Letter x="3" y="16">{letter}</Letter>
	</Svg>
);

const ExplorerIcon = () => (
	<Svg size={24} box="0 0 24 24">
		<path d="M1 3h9l1 2h11v15H1z" fill="#ffe694" />
		<path d="M2 3h8v2H2z" fill="#f4c34d" />
		<path d="M5 21v-6l2-2h10l2 2v6h-4v-4H9v4z" fill="#37aee6" />
	</Svg>
);

const EdgeIcon = () => (
	<Svg size={24} box="0 0 24 24">
		<path d="M2 12Q3 2 13 2q9 1 9 11H8q1 5 6 5 4 0 7-2v4q-3 2-7 2-9 0-10-8 0-5 4-7-4 1-6 5zm6-3h8q0-4-4-4-3 0-4 4z" fill="#0a78d6" />
	</Svg>
);

const ChromeIcon = () => (
	<Svg size={24} box="0 0 24 24">
		<circle cx="12" cy="12" r="11" fill="#fbcd3f" />
		<path d="M12 12 2.500 6.500A11 11 0 0 0 11 23l5.500-9z" fill="#2f9f57" />
		<path d="M2.500 6.500A11 11 0 0 1 22 7H12l-5 7z" fill="#dc4a3c" />
		<circle cx="12" cy="12" r="5" fill="#fff" />
		<circle cx="12" cy="12" r="4" fill="#4285f4" />
	</Svg>
);

const CalcIcon = () => (
	<Svg size={24} box="0 0 24 24">
		<path d="M3 0h18v24H3z" fill="#fff" />
		<path d="M5 2h14v5H5z" fill="#060b13" />
		<path d="M6 10h2v2H6zM11 10h2v2h-2zM16 10h2v2h-2zM6 15h2v2H6zM11 15h2v2h-2zM16 15h2v2h-2zM6 20h2v2H6zM11 20h2v2h-2zM16 20h2v2h-2z" fill="#060b13" />
	</Svg>
);

const AcrobatIcon = () => (
	<Svg size={22} box="0 0 22 22">
		<path d="M.5.500h21v21H.5z" fill="#c3090f" stroke="#7b0508" />
		<path d="M5 17q5-3 6-10 0-3-1-2-1 3 3 7 3 2 5 1 0-2-6-1-6 1-7 4 0 2 2 0" stroke="#fff" strokeWidth="1.200" />
	</Svg>
);

const Bar = () => (
	<Taskbar>
		<TaskButton $w={48} aria-label="Start">
			<Svg size={16} box="0 0 16 16"><path d="M0 2.300 7 1.300V7.500H0zM8 1.100 16 0V7.500H8zM0 8.500H7V14.700L0 13.700zM8 8.500H16V16L8 14.900z" fill="#fff" /></Svg>
		</TaskButton>
		<TaskSearch>
			<Svg size={23} box="0 0 23 23"><circle cx="11.500" cy="11.500" r="9" stroke="#000" strokeWidth="3" /></Svg>
			<input placeholder="Type here to search" aria-label="Type here to search" />
			<Svg size={16} box="0 0 16 16"><path d="M5.500.500h5v11h-5zM2.500 8v4q0 1.500 2 1.500h7q2 0 2-1.500V8M8 13v2.500M5 15.500h6" stroke="#222" /></Svg>
		</TaskSearch>
		<TaskButton aria-label="Task view">
			<Svg size={16} box="0 0 16 16"><path d="M.5 0v2.500h10V0M.5 15.500V13h10v2.500M1.500 4.500h8v6h-8zM14.500 0v3M14.500 9v7" stroke="#fff" /><path d="M13 4h3v3h-3z" fill="#fff" /></Svg>
		</TaskButton>
		<TaskButton $w={52} $running aria-label="File Explorer"><ExplorerIcon /></TaskButton>
		<TaskButton $w={46} aria-label="Edge"><EdgeIcon /></TaskButton>
		<TaskButton $w={51} $running aria-label="Chrome"><ChromeIcon /></TaskButton>
		<TaskButton $w={48} aria-label="Outlook">
			<OfficeIcon color="#0072c6" letter="O"><path d="M14 6h9v12h-9z" fill="#fff" /><path d="m14 8 4 4 5-5" stroke="#0072c6" strokeWidth="1.500" /></OfficeIcon>
		</TaskButton>
		<TaskButton aria-label="Excel">
			<OfficeIcon color="#207245" letter="X"><path d="M13 4h10v16H13z" fill="#fff" /><path d="M15 6.500h7M15 9.500h7M15 12.500h7M15 15.500h7M15 18h7M18.500 5v14" stroke="#207245" /></OfficeIcon>
		</TaskButton>
		<TaskButton aria-label="Word">
			<OfficeIcon color="#2b5797" letter="W"><path d="M13 4h10v16H13z" fill="#fff" /><path d="M14 6.500h8M14 9.500h8M14 12.500h8M14 15.500h8M14 18h8" stroke="#2b5797" /></OfficeIcon>
		</TaskButton>
		<TaskButton aria-label="Calculator"><CalcIcon /></TaskButton>
		<TaskButton $w={48} $active aria-label="PlanSwift"><LogoIcon size={24} /></TaskButton>
		<TaskButton $running aria-label="Acrobat Reader"><AcrobatIcon /></TaskButton>
		<Tray>
			<TrayButton $w={36} aria-label="People">
				<Svg size={16} box="0 0 16 16"><circle cx="5" cy="8" r="2.500" stroke="#fff" /><circle cx="11.500" cy="3.500" r="2.500" stroke="#fff" /><path d="M1 15q0-4 4-4t4 4M9 8q6-3 6 3" stroke="#fff" /></Svg>
			</TrayButton>
			<TrayButton $w={34} aria-label="Show hidden icons"><Chevron turn={180} color="#fff" size={13} width={1.2} /></TrayButton>
			<TrayButton $w={20} aria-label="Battery">
				<Svg size={16} box="0 0 16 16"><path d="M5 4.500h10v7H5" stroke="#fff" /><path d="M6 6h8v4H6zM15 6h1v4h-1zM0 4h5v3L4 8v3H1V8L0 7z" fill="#fff" /><path d="M1.500 2v2M3.500 2v2" stroke="#fff" /></Svg>
			</TrayButton>
			<TrayButton $w={26} aria-label="Network">
				<Svg size={16} box="0 0 16 16"><path d="M3 14Q3 5 14 4M6 14q0-6 8-7M9 14q0-3 5-4" stroke="#ccc" /><path d="M1 13Q1 3 13 2" stroke="#888" /><circle cx="12" cy="13" r="1.500" fill="#fff" /></Svg>
			</TrayButton>
			<TrayButton $w={22} aria-label="Volume">
				<Svg size={18} box="0 0 18 18"><path d="M1.500 6.500h2l4-3v11l-4-3h-2zM10 7q1.500 2 0 4M12 5q3 4 0 8M14.500 3.500q4 5.500 0 11" stroke="#fff" /></Svg>
			</TrayButton>
			<TrayButton $w={36}>ENG</TrayButton>
			<Clock $w={72}>09:33<br />12-11-2018</Clock>
			<TrayButton $w={48} aria-label="1 notification">
				<Svg size={26} box="0 0 26 26">
					<path d="M2 3h16v13h-9l-3 4v-4H2z" fill="#fff" />
					<path d="M5 6.500h10M5 9.500h10M5 12.500h6" stroke="#060b13" />
					<circle cx="18" cy="17" r="7.500" fill="#3a3f47" stroke="#7d8188" />
					<Letter x="15" y="21">1</Letter>
				</Svg>
			</TrayButton>
			<ShowDesktop aria-label="Show desktop" />
		</Tray>
	</Taskbar>
);

const App = () => {
	return (
		<Desktop>
			<GlobalStyle />
			<Header />
			<Workspace>
				<LeftPanel />
				<Splitter><Grip /></Splitter>
				<EstimateGrid />
				<Splitter><Grip /></Splitter>
				<RightPanel />
			</Workspace>
			<Bar />
		</Desktop>
	);
};
export default App;
